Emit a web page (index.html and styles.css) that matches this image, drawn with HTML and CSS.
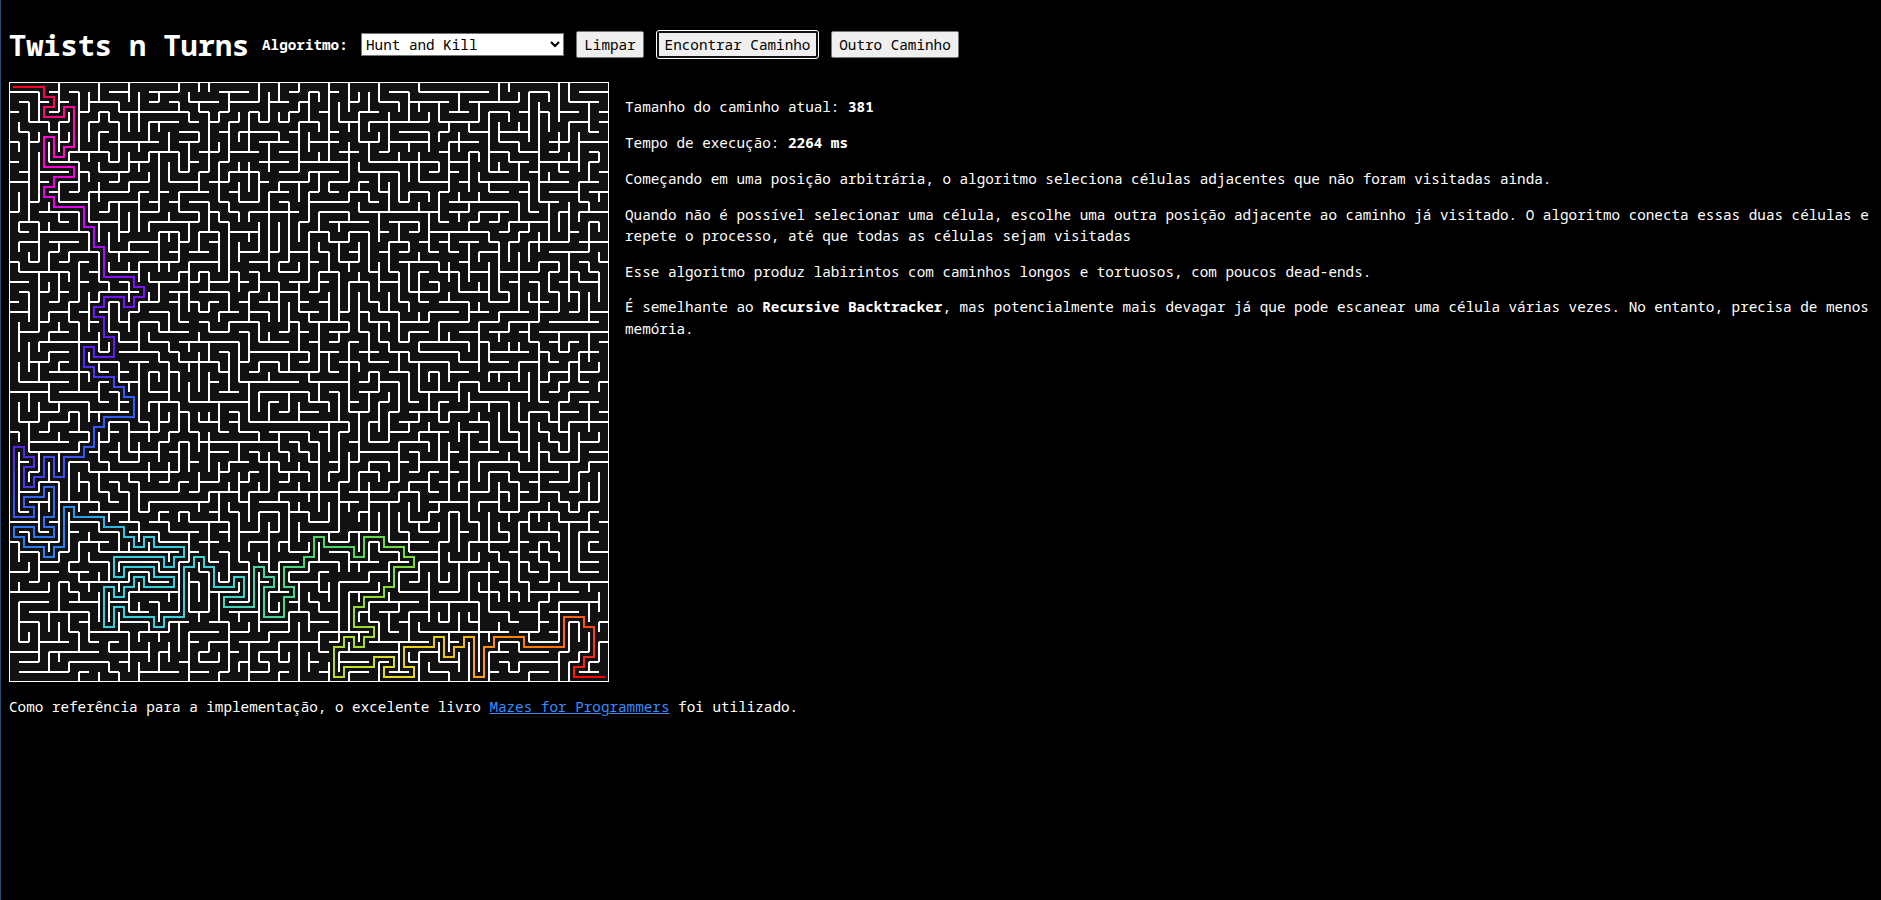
FILE: index.html
```html
<!DOCTYPE html>
<html lang="pt-BR">
<head>
<meta charset="utf-8">
<title>Twists n Turns</title>
<link rel="stylesheet" href="styles.css">
</head>
<body>
<header class="toolbar">
  <h1 class="title">Twists n Turns</h1>
  <label class="label" for="algorithm">Algoritmo:</label>
  <select class="select" id="algorithm"><option>Hunt and Kill</option></select>
  <button class="button clear">Limpar</button>
  <button class="button find focused">Encontrar Caminho</button>
  <button class="button other">Outro Caminho</button>
</header>
<main class="content">
  <svg class="maze" id="maze" width="600" height="600" viewBox="0 0 600 600"></svg>
  <section class="info">
    <p>Tamanho do caminho atual: <b>381</b></p>
    <p>Tempo de execução: <b>2264 ms</b></p>
    <p>Começando em uma posição arbitrária, o algoritmo seleciona células adjacentes que não foram visitadas ainda.</p>
    <p>Quando não é possível selecionar uma célula, escolhe uma outra posição adjacente ao caminho já visitado. O algoritmo conecta essas duas células e repete o processo, até que todas as células sejam visitadas</p>
    <p>Esse algoritmo produz labirintos com caminhos longos e tortuosos, com poucos dead-ends.</p>
    <p>É semelhante ao <b>Recursive Backtracker</b>, mas potencialmente mais devagar já que pode escanear uma célula várias vezes. No entanto, precisa de menos memória.</p>
  </section>
</main>
<footer class="footer"><p>Como referência para a implementação, o excelente livro <a href="#">Mazes for Programmers</a> foi utilizado.</p></footer>
<script src="maze.js"></script>
</body>
</html>
```
FILE: styles.css
```css
html {
  background: #000;
}
body {
  box-sizing: border-box;
  min-height: 100vh;
  margin: 0;
  padding: 8px 8px 0;
  border-left: 1px solid #24507a;
  background: #000;
  color: #fff;
  font-family: "Noto Sans Mono", "DejaVu Sans Mono", monospace;
  font-size: 14.3px;
  line-height: 1.5;
}
p {
  margin: 14.3px 0;
}
.toolbar {
  display: flex;
  align-items: center;
  height: 73px;
  margin-bottom: 1px;
}
.title {
  width: 240px;
  margin: 0 13px 0 0;
  font-size: 28.6px;
  line-height: 42px;
  white-space: nowrap;
}
.label {
  width: 86px;
  margin-right: 13px;
  font-weight: bold;
  white-space: nowrap;
}
.select,
.button {
  box-sizing: border-box;
  font-family: inherit;
  font-size: 14.3px;
  color: #000;
  white-space: nowrap;
}
.select {
  width: 203px;
  height: 23px;
  margin-right: 12px;
  padding: 0;
  border: 1px solid #767676;
  border-radius: 0;
  background-color: #fff;
}
.button {
  height: 27px;
  padding: 0;
  border: 1px solid #767676;
  border-radius: 2px;
  background: #efefef;
}
.clear {
  width: 68px;
  margin-right: 13px;
}
.find {
  width: 161px;
  margin-right: 13px;
}
.other {
  width: 128px;
}
.focused {
  border: 2px solid #101010;
  outline: 1px solid #fff;
}
.content {
  display: flex;
  gap: 16px;
  height: 600px;
}
.maze {
  flex: none;
  background: #111;
}
.wall {
  fill: none;
  stroke: #fff;
  stroke-width: 2;
}
.step {
  stroke-width: 2;
  stroke-linecap: square;
}
.info {
  flex: 1;
  min-width: 0;
}
.footer {
  overflow: hidden;
}
.footer a {
  color: #3b8cff;
}
```
FILE: maze.js
```js
// Walls are stored in nine 20x20 blocks. Each line of a block lists its
// segments as pairs of base-36 digits: start and end, local to the block.
const blocks = [
  { x: 0, y: 0,
    h: "03 45 67 ac eh|12 34 56 8b ef gh ik|01 45 78 9a bi jk|24 56 89 ab eh ij|12 45 9a hj|01 23 56 af hj|6a eh jk|01 47 ab ce ij|12 36 78 9c hi jk|02 34 57 ab ce gj|45 67 8c de fg hk|23 58 ad ef gh ik|01 37 9a df hj|13 56 8b ej|12 38 bc fh jk|13 47 cf hi|45 69 ae gh ik|01 23 56 78 dh ik|16 89 ad hi jk|02 78 9a bc eh ij",
    v: "45 67 bd ef gh ij|24 5e hi|14 56 7c ei jk|45 68 cd ef hj|03 47 ac de gh jk|34 56 78 hi jk|17 8b df ik|13 46 78 9a be fh|02 34 57 89 ac eg hk|34 78 cd fh ij|23 48 9a cg hi|02 35 79 ab df gh ij|15 67 89 bf ik|46 78 9a ef jk|12 45 7d fj|57 8a de fg ij|01 23 79 bd fi jk|12 34 69 eg ik|01 23 56 9b de fh jk|01 39 cf jk" },
  { x: 20, y: 0,
    h: "14 89 ab cd ik|01 25 68 9a ef hj|12 45 89 bc fh|01 23 56 78 9b df gk|12 37 89 cd jk|58 ad fh ik|01 25 79 df hi|12 58 9e gk|25 79 ad fj|02 56 7a ce fg|23 68 ab cd eg hi|12 35 78 ae gh jk|01 23 49 be fk|12 9a cg ik|01 25 ac eg hi|01 ce ik|35 67 8a bc ef hi jk|01 46 78 ab df jk|23 45 79 bd gh ij|02 34 57 8a bc eg hj",
    v: "34 67 8c de fj|13 48 9a cd ek|34 56 89 ac de gi jk|37 8b de fg|02 34 9c eh jk|14 69 bj|02 34 56 ab eh ij|34 ci|01 23 49 ac eg ij|14 57 9a be fk|12 45 78 9b df gh jk|08 ab fg hj|24 ef gi jk|03 45 6a bc de fg ij|12 36 89 ab cd gi jk|13 45 68 bc fj|02 56 9b dg ik|37 ad gj|23 78 9c eg jk|14 67 8a bc gh ik" },
  { x: 40, y: 0,
    h: "18 ce hk|04 6b gj|46 8a bc de fh jk|02 37 gi jk|02 34 68 9c ij|02 47 9b eg hk|34 67 8a bd ef ij|03 46 ac dh ij|23 45 8a cd fg jk|14 56 7c dg hj|02 34 8a bc eh ik|4b df hi|03 46 7a cd fg hk|01 34 67 89 ae ij|01 28 9a bc gh|12 34 57 89 ab cg hk|23 45 79 ei|03 56 df hi jk|12 35 68 9d ef gh ij|23 ab cd fg hj",
    v: "01 23 7a cd ef hi jk|34 57 bc dh|24 56 89 be ij|45 6b fh ik|13 57 bc de jk|45 7b cd ef gk|24 78 9a bc de hi|39 ab fg ik|02 46 89 de gk|01 34 78 ef gi|12 45 67 8a ce fg hk|16 ad ef gi|2c fh ij|12 35 9a cg jk|04 57 89 df ij|02 46 78 cg hk|59 ac de jk|25 8a cd eh ij|78 bc ef hi jk" },
  { x: 0, y: 20,
    h: "12 34 56 9d gi jk|01 45 67 89 ab df gh ij|02 46 78 9a cd eg jk|34 67 89 bc df hi jk|13 46 ab fi|39 bd eg hk|46 9a bf gh|24 56 8b ce fg hk|48 9a bc ef gh|16 9a bd|04 59 ab eg|48 9a bc eh ik|35 67 8c hi|13 46 ac de fg jk|01 34 68 ab cf gh ij|26 78 9a fg hi jk|27 89 ab cf gh|12 68 9a bd ij|23 8h|35 78 ab cd fg hi jk",
    v: "47 8a ce fg hk|14 69 bd eh jk|05 67 8a ce hj|01 34 56 78 ac ef ik|02 45 89 cd fg hj|24 de ik|02 4b df gh jk|15 78 9a ce fg ij|12 57 89 ac de fi jk|01 25 67 eg ij|24 56 8a bd gi|02 35 ab eh jk|23 47 8e gi|12 56 9b cd eg ik|02 45 78 9a cf gi|35 67 8c de fg ik|14 78 9b cf gj|03 67 89 ac df gj|23 56 7b de fh jk|01 23 45 68 9c de fj" },
  { x: 20, y: 20,
    h: "02 45 79 ab|01 34 57 9a bc gh jk|13 46 9b de fg hj|25 89 ae gi jk|02 34 78 9a ce fg|03 58 ab cd ef hi jk|12 4a bd fh ik|01 34 57 9a df gi|12 45 7b cd gh ik|01 39 ae fg hj|13 5a cd fh|04 67 ac ef hi|23 78 9b eg ij|01 23 4e gh jk|12 35 6a bc de ik|07 89 ab ef gi jk|02 45 78 9a fj|24 57 ab cd ef gi jk|12 45 7a cd fh|01 34 78 de ij",
    v: "34 89 cf ik|13 45 7b ij|01 6a df gi jk|14 58 ae jk|01 46 89 bd fg hi|12 34 56 9a ce hk|04 89 fh ij|25 79 bd hi jk|03 47 ce gh ij|34 78 9a bc fg hi jk|01 49 ac gk|14 79 cd eh jk|04 56 be fj|03 45 6d ef hk|15 89 di jk|02 34 58 9a bd eg ij|01 23 46 9b cf jk|13 45 67 bc dg ij|02 36 79 ad gk|01 23 56 78 9c ef" },
  { x: 40, y: 20,
    h: "03 58 9a ef gh|12 36 8a ce|25 68 9c df gh ik|02 36 79 ad ej|02 57 8a bc dk|16 78 cd ef gh jk|15 8c de fg hj|04 57 8a bd ef gh|23 46 8b eg hj|57 de fg hi jk|15 7c ef gi|01 34 6a de fg hj|03 46 ce fh jk|01 34 68 bc ef gk|14 57 ab de fg|02 78 9b ef hj|01 45 69 bc de fg ik|14 56 7b eh ik|01 23 45 8a bf hi|02 34 56 ab cd eg",
    v: "02 34 67 8b de fg hj|34 9a bd ef gh jk|01 46 9b ce fi|12 56 8a de gk|01 78 ac eg|24 67 bd fk|01 23 49 ab de ik|02 68 9a cd eh jk|01 34 56 9a dg|12 45 67 ab cf hi jk|03 67 8a ce fh ij|12 46 9c di|04 6c ef gk|01 78 9a de fg hi|13 57 ab cf gh|02 67 8a bc eh ik|13 7a fi jk|14 58 cf ij|02 89 ab fg jk" },
  { x: 0, y: 40,
    h: "13 9a bc dh ij|24 59 ab ek|12 8c de fg hi|03 45 69 bd eg ik|12 34 67 9b cf gj|01 25 7a fi jk|13 56 9h ij|35 67 8a bf hi|02 35 68 ce fh jk|23 56 7c eg ij|04 67 ch|14 69 ac ef|28 ce fh ik|13 78 be gi|67 8c dg ik|12 36 89 ab ij|03 49 ae fg jk|13 6a bc hi jk|16 78 ab dh ik",
    v: "03 68 ab cg|56 89 fg|01 25 7a ei|13 67 ab df hj|06 78 ad eg hi|02 37 89 ab df ij|01 23 68 9a bc fh jk|02 56 78 ab dg|01 23 45 67 9a be jk|12 34 8a be gh ij|01 57 89 ab df jk|14 67 9a bd fj|03 46 ab cd fg ik|23 67 9a ef gi|34 56 89 ce fg hj|45 78 bc ef gi|01 34 8d eh|34 58 9d fk|01 23 89 ac de hi|12 48 9d gh" },
  { x: 20, y: 40,
    h: "03 46 7d ei jk|34 58 df gj|01 23 57 8a fg|02 ac|12 35 67 9d eh jk|01 46 78 ce gh ik|12 8a ce hj|01 34 56 79 ad eh ik|24 67 8a bc gi jk|12 56 8b dg|03 68 bc eh jk|24 89 ab gk|25 67 8a bd fg hj|02 58 ac gh jk|01 24 68 bg ij|02 36 7b cd gk|23 57 bc dj|01 34 56 78 ab dg hi|12 46 78 bc eg ik",
    v: "14 9a be hi jk|01 23 46 7a ej|02 38 ab de ij|14 67 8c ef gk|01 35 78 9f hi|01 49 bd fg ij|12 35 67 8b cd gi jk|27 9a df hi|01 23 46 ad ek|12 34 67 89 bc df hj|03 68 9b cd fh|24 56 ac ik|05 89 af fg hj|23 56 79 bf gh jk|01 34 57 89 bc de fg|05 68 9a ce|35 67 ab eg ik|01 26 8a bc df|12 35 78 9b cd gj|01 24 57 dg hi" },
  { x: 40, y: 40,
    h: "01 23 68 9a bc df gh|26 79 bd fg hj|23 45 9b cf gh ij|02 67 bc fi jk|13 56 9a cf hj|02 34 6a bc de ij|03 89 ab cd ef ik|13 47 9a bc de hj|01 69 cd eg hj|01 34 9a bc de gk|02 35 79 ab ch|01 27 de fj|02 8a bd eh|34 67 ab de gh jk|17 7a bd ef|02 45 9b cf jk|13 8a be fg hi|01 35 9a bf gh ij|24 89 ab ce hj",
    v: "13 45 8a ef hk|01 34 9e ij|23 45 6a de gi|02 36 78 9a ce fh jk|01 37 8b df hj|04 68 9c de gk|23 46 78 ab cj|01 37 8d fg hk|03 45 78 bc ef gh|12 34 56 8c de ij|03 4a bc gh ij|35 89 ac fg jk|02 34 68 cf|23 45 67 8a bc|12 34 56 78 ab cg hk|23 4a eh ik|01 23 59 eg hi|02 35 67 ab ce fh ij|02 bd ef gi" }
];

// Corner coordinates of the solution, alternating x and y from cell (0, 0).
const corners = [3,1,4,2,3,3,5,2,6,6,5,7,4,5,3,8,6,9,4,10,3,11,4,12,7,14,8,16,9,19,12,20,13,21,12,22,11,21,9,22,8,23,9,25,10,27,8,26,7,28,8,29,10,30,11,31,12,33,9,34,8,36,7,37,5,39,4,37,3,39,2,40,1,38,2,37,1,36,0,43,2,42,1,41,3,40,4,43,3,44,4,45,2,44,0,45,1,46,3,47,4,46,5,42,6,43,9,44,11,45,12,46,13,45,14,46,17,47,16,48,15,47,10,49,11,48,14,49,16,50,13,49,12,50,11,51,10,50,9,54,10,52,11,53,14,54,15,53,17,48,18,47,19,48,20,50,22,49,23,51,21,52,24,48,25,49,26,50,25,53,27,51,28,50,27,48,29,47,30,45,31,46,34,47,35,45,37,46,39,47,40,48,38,50,37,51,35,52,34,54,36,55,35,56,34,55,33,56,32,59,33,58,36,57,38,58,37,59,40,58,39,56,42,55,43,57,44,56,45,55,46,59,47,56,48,55,51,56,55,53,57,54,58,57,57,58,56,59,59];

// Colour stops keyed by the cell they fall on.
const stops = {
  "0,0": [255, 0, 0], "3,1": [255, 0, 72], "6,6": [255, 12, 200], "3,8": [255, 0, 216],
  "7,12": [226, 0, 245], "8,16": [175, 12, 255], "12,19": [128, 16, 255], "9,25": [105, 24, 248],
  "7,26": [90, 30, 248], "10,29": [75, 55, 248], "12,31": [48, 96, 255], "7,36": [52, 88, 250],
  "5,39": [55, 82, 245], "3,37": [62, 75, 242], "0,36": [85, 35, 235], "0,43": [58, 85, 240],
  "4,43": [44, 112, 240], "0,45": [40, 118, 245], "5,42": [34, 140, 240], "9,44": [44, 176, 235],
  "13,46": [52, 205, 225], "17,53": [56, 210, 220], "20,50": [56, 212, 220], "24,52": [66, 214, 180],
  "28,51": [70, 214, 140], "34,46": [72, 214, 96], "40,47": [120, 220, 56], "34,54": [150, 220, 44],
  "32,59": [180, 220, 40], "37,59": [225, 220, 30], "44,57": [235, 195, 20], "46,59": [255, 165, 0],
  "51,56": [255, 125, 0], "57,53": [255, 95, 0], "58,57": [255, 48, 24], "59,59": [255, 0, 0]
};

const svg = document.getElementById("maze");
function add(name, attrs) {
  const el = document.createElementNS("http://www.w3.org/2000/svg", name);
  for (const key in attrs) el.setAttribute(key, attrs[key]);
  svg.appendChild(el);
}

let walls = "M0 0H600M0 600H600M0 0V600M600 0V600";
for (const b of blocks) {
  b.h.split("|").forEach((line, n) => line.split(" ").forEach(s => {
    const y = (b.y + n + 1) * 10;
    walls += `M${(b.x + parseInt(s[0], 36)) * 10} ${y}H${(b.x + parseInt(s[1], 36)) * 10}`;
  }));
  b.v.split("|").forEach((line, n) => line.split(" ").forEach(s => {
    const x = (b.x + n + 1) * 10;
    walls += `M${x} ${(b.y + parseInt(s[0], 36)) * 10}V${(b.y + parseInt(s[1], 36)) * 10}`;
  }));
}
add("path", { class: "wall", d: walls });

const cells = [[0, 0]];
const at = [0, 0];
corners.forEach((target, n) => {
  const axis = n % 2;
  while (at[axis] !== target) {
    at[axis] += Math.sign(target - at[axis]);
    cells.push([...at]);
  }
});
const marks = [];
cells.forEach((c, n) => { if (stops[c]) marks.push([n, stops[c]]); });
for (let n = 1; n < cells.length; n++) {
  let m = 1;
  while (marks[m][0] < n) m++;
  const [i0, a] = marks[m - 1], [i1, b] = marks[m];
  const t = (n - i0) / (i1 - i0);
  const rgb = a.map((v, k) => Math.round(v + (b[k] - v) * t));
  add("line", {
    class: "step", stroke: `rgb(${rgb})`,
    x1: cells[n - 1][0] * 10 + 5, y1: cells[n - 1][1] * 10 + 5,
    x2: cells[n][0] * 10 + 5, y2: cells[n][1] * 10 + 5
  });
}
```
